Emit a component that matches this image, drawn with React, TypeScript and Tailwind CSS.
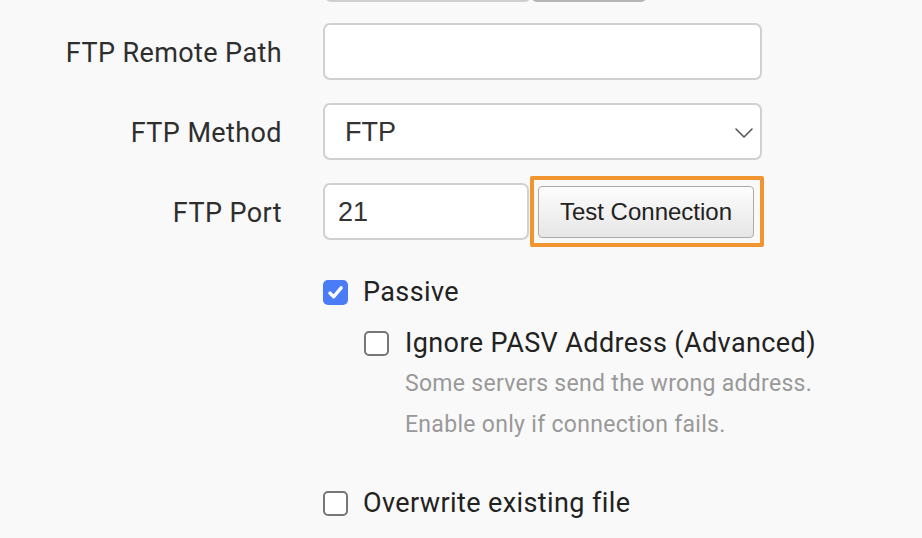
import { ChevronDown } from 'lucide-react'

function Check({ checked }: { checked?: boolean }) {
  if (checked) {
    return (
      <span className="flex h-[25px] w-[25px] shrink-0 items-center justify-center rounded-[5px] bg-[#4a7cf6]">
        <svg width="17" height="17" viewBox="0 0 16 16">
          <path d="M2.8 8.6 L6.3 12 L13.3 3.6" fill="none" stroke="white" strokeWidth="3.2" strokeLinecap="round" strokeLinejoin="round" />
        </svg>
      </span>
    )
  }
  return <span className="block h-[25px] w-[25px] shrink-0 rounded-[5px] border-2 border-[#767676] bg-white" />
}

const label = 'w-[282px] shrink-0 pt-[3px] text-right text-[27px] leading-none tracking-[0.4px] text-[#2e2e2e]'
const field =
  'h-[57px] rounded-[7px] border-2 border-[#d0d0d0] bg-white text-[27px] text-[#333] font-["Liberation_Sans",sans-serif] flex items-center'

export default function App() {
  return (
    <div className='relative h-[538px] w-[922px] overflow-hidden bg-[#f9f9f9] font-["Roboto",sans-serif]'>
      {/* previous row, cut off at the top */}
      <div className="-mt-[40px] ml-[325px] flex h-[42px] w-[322px]">
        <div className="flex-1 rounded-b-[6px] border-2 border-[#cfcfcf] bg-white" />
        <div className="w-[116px] rounded-b-[6px] border-2 border-[#b5b5b5] bg-[#eaeaea]" />
      </div>

      <div className="mt-[21px] flex flex-col gap-[23px]">
        <div className="flex h-[57px] items-center gap-[41px]">
          <span className={label}>FTP Remote Path</span>
          <div className={`${field} w-[439px]`} />
        </div>

        <div className="flex h-[57px] items-center gap-[41px]">
          <span className={label}>FTP Method</span>
          <div className={`${field} w-[439px] justify-between pl-[20px] pr-0 pt-[2px]`}>
            <span>FTP</span>
            <ChevronDown size={32} strokeWidth={1.2} className="text-[#555]" />
          </div>
        </div>

        <div className="flex h-[57px] items-center gap-[41px]">
          <span className={label}>FTP Port</span>
          <div className="flex h-[57px] items-center">
            <div className={`${field} w-[206px] pl-[13px] pt-[2px]`}>21</div>
            <div className="ml-[1px] shrink-0 rounded-[2px] border-4 border-[#f0952f] pb-[5px] pl-[4px] pr-[6px] pt-[6px]">
              <button className='flex h-[52px] w-[216px] items-center justify-center rounded-[4px] border border-[#ababab] bg-gradient-to-b from-[#fdfdfd] to-[#e6e6e6] text-[24px] text-[#222] font-["Liberation_Sans",sans-serif]'>
                Test Connection
              </button>
            </div>
          </div>
        </div>
      </div>

      <div className="ml-[323px] mt-[40px] flex h-[25px] items-center gap-[15px]">
        <Check checked />
        <span className="text-[27px] leading-none tracking-[0.4px] text-[#222]">Passive</span>
      </div>

      <div className="ml-[364px] mt-[26px] flex h-[25px] items-center gap-[16px]">
        <Check />
        <span className="text-[27px] leading-none tracking-[0.4px] text-[#222]">Ignore PASV Address (Advanced)</span>
      </div>
      <div className="ml-[405px] mt-[7px] text-[23px] leading-[41px] tracking-[0.3px] text-[#999]">
        <div>Some servers send the wrong address.</div>
        <div>Enable only if connection fails.</div>
      </div>

      <div className="ml-[323px] mt-[46px] flex h-[25px] items-center gap-[15px]">
        <Check />
        <span className="text-[27px] leading-none tracking-[0.4px] text-[#222]">Overwrite existing file</span>
      </div>
    </div>
  )
}
